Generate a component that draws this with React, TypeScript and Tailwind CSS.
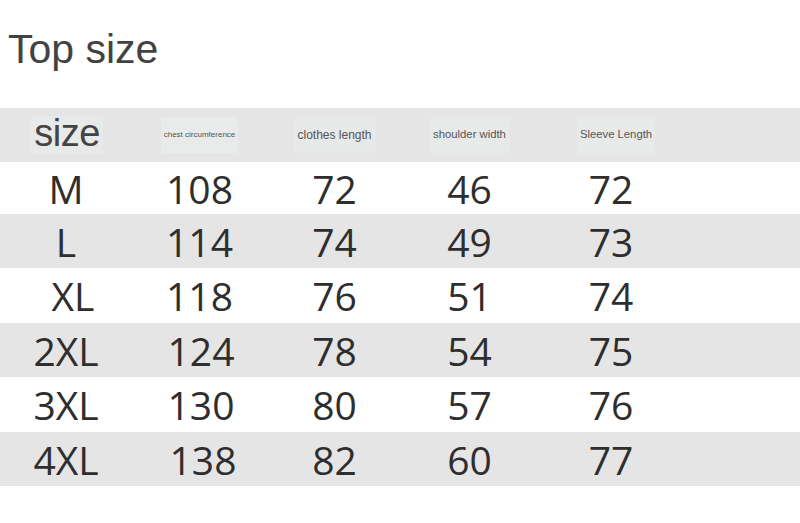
import React from "react";

const rows: { s: string; v: string[]; h: string; sp: string; p1: string }[] = [
  { s: "M", v: ["108", "72", "46", "72"], h: "h-[52px]", sp: "", p1: "" },
  { s: "L", v: ["114", "74", "49", "73"], h: "h-[54px]", sp: "", p1: "" },
  { s: "XL", v: ["118", "76", "51", "74"], h: "h-[55px]", sp: "pl-[14px]", p1: "" },
  { s: "2XL", v: ["124", "78", "54", "75"], h: "h-[54px]", sp: "", p1: "pl-[3px]" },
  { s: "3XL", v: ["130", "80", "57", "76"], h: "h-[55px]", sp: "", p1: "pl-[3px]" },
  { s: "4XL", v: ["138", "82", "60", "77"], h: "h-[54px]", sp: "", p1: "pl-[7px]" },
];

const cols = "grid grid-cols-[132px_135px_135px_135px_142px_1fr]";

export default function App() {
  return (
    <div className="w-[800px] h-[523px] bg-white overflow-hidden">
      <div
        className="pt-[29px] pl-[8px] text-[41px] leading-none text-[#424242]"
        style={{ fontFamily: '"Liberation Sans", Arial, sans-serif' }}
      >
        Top size
      </div>
      <div className="mt-[38px]">
        <div
          className={`${cols} h-[54px] bg-[#e5e5e5] items-center text-[#555]`}
          style={{ fontFamily: '"Liberation Sans", Arial, sans-serif' }}
        >
          <div className="flex justify-center pl-[2px]">
            <div className="bg-[#e8e9e9] px-[3px] h-[38px] flex items-center">
              <span className="text-[38px] leading-none tracking-[-0.5px] text-[#444] -mt-[4px]">size</span>
            </div>
          </div>
          <div className="flex justify-center">
            <div className="bg-[#e9ebeb] w-[77px] h-[36px] flex items-center justify-center">
              <span className="text-[8px] leading-none">chest circumference</span>
            </div>
          </div>
          <div className="flex justify-center">
            <div className="bg-[#e7e8e8] w-[82px] h-[36px] flex items-center justify-center">
              <span className="text-[12px] leading-none">clothes length</span>
            </div>
          </div>
          <div className="flex justify-center">
            <div className="bg-[#e8eaea] w-[80px] h-[36px] flex items-center justify-center">
              <span className="text-[11.3px] leading-none">shoulder width</span>
            </div>
          </div>
          <div className="flex justify-center pl-[16px]">
            <div className="bg-[#e8eaea] w-[78px] h-[36px] flex items-center justify-center">
              <span className="text-[11.3px] leading-none">Sleeve Length</span>
            </div>
          </div>
          <div />
        </div>
        {rows.map((r, i) => (
          <div
            key={r.s}
            className={`${cols} ${r.h} items-center text-[39px] leading-none text-[#2e2e2e] ${i % 2 === 1 ? "bg-[#e5e5e5]" : "bg-white"}`}
            style={{ fontFamily: '"Open Sans", "Noto Sans", sans-serif' }}
          >
            <div className={`text-center ${r.sp}`}>{r.s}</div>
            <div className={`text-center ${r.p1}`}>{r.v[0]}</div>
            <div className="text-center">{r.v[1]}</div>
            <div className="text-center">{r.v[2]}</div>
            <div className="text-center pl-[6px]">{r.v[3]}</div>
            <div />
          </div>
        ))}
      </div>
    </div>
  );
}
